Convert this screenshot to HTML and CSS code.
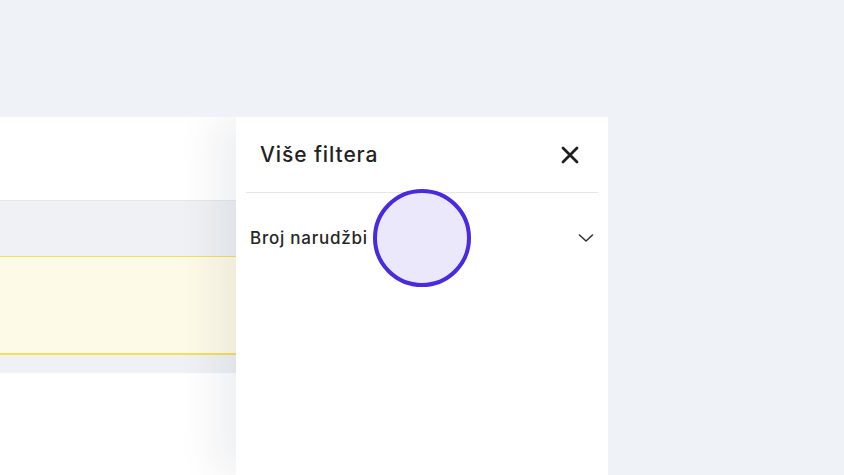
FILE: index.html
```html
<!DOCTYPE html>
<html>
<head>
<meta charset="utf-8">
<link rel="stylesheet" href="styles.css">
</head>
<body>
<div class="page">
  <div class="card">
    <div class="main">
      <div class="m-top"></div>
      <div class="m-gray"></div>
      <div class="m-yellow"></div>
      <div class="m-gray2"></div>
      <div class="m-rest"></div>
    </div>
    <aside class="panel">
      <div class="panel-head">
        <h2 class="panel-title">Više filtera</h2>
        <svg class="close" width="20" height="20" viewBox="0 0 20 20"><path d="M3 3L17 17M17 3L3 17" stroke="#1f1f1f" stroke-width="2.8" stroke-linecap="round"/></svg>
      </div>
      <div class="divider"></div>
      <div class="filter-row">
        <span class="filter-label">Broj narudžbi</span>
        <svg class="chev" width="16" height="10" viewBox="0 0 16 10"><path d="M1.5 2L8 8L14.5 2" fill="none" stroke="#333" stroke-width="1.6" stroke-linecap="round" stroke-linejoin="round"/></svg>
        <span class="cursor-dot"></span>
      </div>
    </aside>
  </div>
</div>
</body>
</html>
```
FILE: styles.css
```css
* { box-sizing: border-box; }
html, body { margin: 0; padding: 0; }
body {
  background: #eff2f7;
  font-family: Inter, "Noto Sans", sans-serif;
  width: 844px;
  height: 475px;
  overflow: hidden;
}
.page {
  padding-top: 117px;
}
.card {
  display: flex;
  width: 608px;
  height: 358px;
  background: #fff;
  overflow: hidden;
}
.main {
  width: 236px;
  display: flex;
  flex-direction: column;
}
.m-top { height: 83px; background: #fff; }
.m-gray { height: 56px; background: #eff1f4; border-top: 1px solid #e6e7ea; }
.m-yellow { height: 99px; background: #fefae8; border-top: 1px solid #f6de5c; border-bottom: 2px solid #f6de5c; }
.m-gray2 { height: 18px; background: #eff1f4; }
.m-rest { flex: 1; background: #fff; }
.panel {
  width: 372px;
  background: #fff;
  box-shadow: -20px 0 40px rgba(20, 30, 50, 0.07);
  position: relative;
  padding: 0 10px;
}
.panel-head {
  display: flex;
  align-items: center;
  justify-content: space-between;
  height: 75px;
  padding: 0 18px 0 14px;
}
.panel-title {
  margin: 0;
  font-size: 21px;
  font-weight: 500;
  color: #222;
  letter-spacing: 0.9px;
}
.close { display: block; }
.divider { height: 1px; background: #e6e6e8; }
.filter-row {
  position: relative;
  display: flex;
  align-items: center;
  justify-content: space-between;
  height: 90px;
  padding: 0 4px 0 4px;
}
.filter-label {
  font-size: 17px;
  font-weight: 500;
  color: #262626;
  letter-spacing: 0.75px;
}
.chev { display: block; }
.cursor-dot {
  position: absolute;
  left: 127px;
  top: -4px;
  width: 98px;
  height: 98px;
  border-radius: 50%;
  background: #ebe8fb;
  border: 4px solid #4a2adf;
}
```
